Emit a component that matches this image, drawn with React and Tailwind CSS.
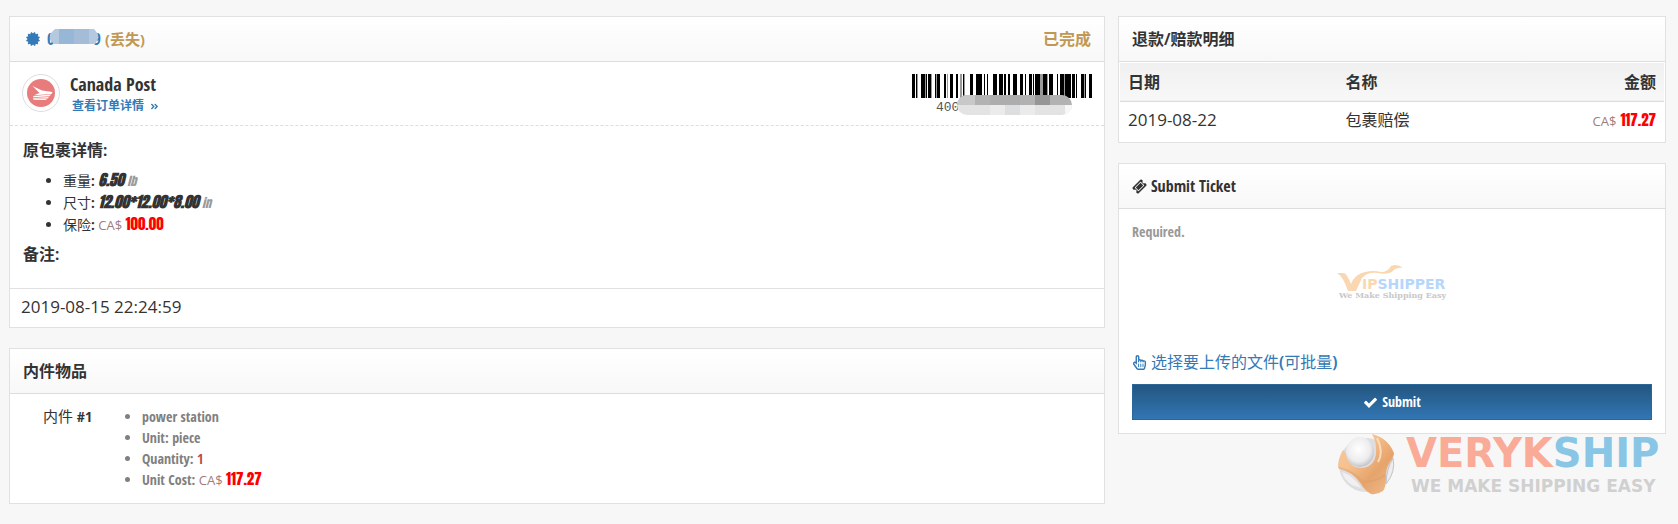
import { FaAngleDoubleRight, FaRegHandPointer } from "react-icons/fa";

const BARS = [
  [0, 3], [4, 1], [9, 4], [14, 1], [16, 3], [23, 1], [25, 3], [32, 2], [38, 3], [44, 2],
  [51, 1], [58, 3], [64, 6], [72, 1], [75, 1], [81, 4], [87, 4], [92, 2], [96, 2],
  [101, 4], [108, 3], [113, 1], [117, 3], [121, 1], [123, 5], [131, 4], [137, 4], [145, 1],
  [148, 4], [153, 6], [160, 3], [164, 1], [169, 3], [173, 1], [177, 3],
];
const GRAY_BARS = [[5, 1], [13, 2], [19, 1], [24, 1], [35, 1], [48, 2], [52, 1], [128, 3], [135, 1], [152, 1], [172, 2]];

const ITEMS = [
  { name: "power station", unit: "piece", quantity: 1, cost: "117.27" },
];

const REFUNDS = [
  { date: "2019-08-22", name: "包裹赔偿", amount: "117.27" },
];

export default function App() {
  return (
    <div className="min-h-screen bg-[#f7f7f7] pt-4 pl-[9px] pr-3 text-[#333] font-['Open_Sans_Condensed','Noto_Sans_CJK_SC',sans-serif]">
      <div className="grid grid-cols-[2fr_1fr] gap-[13px] items-start">
        <main className="flex flex-col gap-5 min-w-0">
          <PackageCard />
          <ItemsCard />
        </main>
        <aside className="flex flex-col min-w-0">
          <RefundCard />
          <TicketCard />
          <VerykLogo />
        </aside>
      </div>
    </div>
  );
}

function Card({ children, className = "" }) {
  return <section className={`bg-white border border-[#e1e1e1] ${className}`}>{children}</section>;
}

function CardHeader({ children }) {
  return (
    <header className="h-[45px] px-[13px] flex items-center border-b border-[#ddd] bg-linear-to-b from-white to-[#f8f8f8] font-bold text-base">
      {children}
    </header>
  );
}

function Money({ value }) {
  return (
    <>
      <span className="font-['Open_Sans',sans-serif] text-[13px] leading-none font-medium text-[#a07c7c]">CA$</span>{" "}
      <span className="font-['Anton',sans-serif] font-normal text-[15px] leading-none text-[#f00]">{value}</span>
    </>
  );
}

/* Package */
function PackageCard() {
  return (
    <Card>
      <CardHeader>
        <div className="flex-1 flex items-center gap-1 pl-0.5">
          <a href="#package" className="flex items-center gap-1.5 text-[#337ab7]">
            <CertificateIcon />
            <span className="relative flex w-[54px] justify-between">
              <span>0</span><span>9</span>
              <IdMask />
            </span>
          </a>
          <span className="text-[#c09853] text-[15px]">(丢失)</span>
        </div>
        <span className="text-[#c09853]">已完成</span>
      </CardHeader>

      <div className="flex items-start h-16 p-3 border-b border-dashed border-[#ddd]">
        <CanadaPostLogo />
        <div className="pl-2.5">
          <h2 className="font-bold text-lg leading-5">Canada Post</h2>
          <a href="#order" className="flex items-center gap-1.5 pl-0.5 text-xs leading-6 font-bold text-[#337ab7]">
            查看订单详情 <FaAngleDoubleRight size={9} />
          </a>
        </div>
        <Barcode />
      </div>

      <div className="px-[13px] pt-3 pb-[22px]">
        <h3 className="font-bold text-base leading-6">原包裹详情:</h3>
        <ul className="list-disc pl-10 mt-2 text-sm leading-[22px]">
          <li className="h-[22px]">重量<b>:</b> <Measure value="6.50" unit="lb" /></li>
          <li className="h-[22px]">尺寸<b>:</b> <Measure value="12.00*12.00*8.00" unit="in" /></li>
          <li className="h-[22px]">保险<b>:</b> <Money value="100.00" /></li>
        </ul>
        <h3 className="font-bold text-base leading-6 mt-1.5">备注:</h3>
      </div>

      <div className="h-[39px] px-[11px] border-t border-[#e1e1e1] text-[17px] leading-9 font-['Open_Sans',sans-serif]">
        2019-08-15 22:24:59
      </div>
    </Card>
  );
}

function Measure({ value, unit }) {
  return (
    <span className="font-['Anton',sans-serif] italic leading-none">
      <span className="text-[15px] leading-none font-bold">{value}</span>{" "}
      <span className="text-xs leading-none text-[#999]">{unit}</span>
    </span>
  );
}

/* Items */
function ItemsCard() {
  return (
    <Card>
      <CardHeader>内件物品</CardHeader>
      {ITEMS.map((item, i) => (
        <div key={item.name} className="flex pl-[33px] pt-3 pb-[13px] leading-[21px]">
          <div className="w-[99px] text-[15px] leading-[21px]">内件 <b>#{i + 1}</b></div>
          <ul className="list-disc text-sm leading-[21px] font-bold text-[#808080]">
            <li className="h-[21px]">{item.name}</li>
            <li className="h-[21px]">Unit: {item.unit}</li>
            <li className="h-[21px]">Quantity: <span className="text-[#b94a48]">{item.quantity}</span></li>
            <li className="h-[21px]">Unit Cost: <Money value={item.cost} /></li>
          </ul>
        </div>
      ))}
    </Card>
  );
}

/* Refunds */
function RefundCard() {
  return (
    <Card className="mb-5">
      <CardHeader>退款/赔款明细</CardHeader>
      <div className="p-px pb-1">
        <table className="w-full table-fixed text-base">
          <thead>
            <tr className="h-[38px] border-b border-[#ddd] bg-linear-to-b from-[#f0f0f0] to-[#f8f8f8]">
              <th className="w-2/5 px-2 text-left">日期</th>
              <th className="w-2/5 px-2 text-left">名称</th>
              <th className="px-2 text-right">金额</th>
            </tr>
          </thead>
          <tbody>
            {REFUNDS.map((r) => (
              <tr key={r.date} className="h-[37px]">
                <td className="px-2 text-[17px] font-['Open_Sans',sans-serif]">{r.date}</td>
                <td className="px-2">{r.name}</td>
                <td className="px-2 text-right"><Money value={r.amount} /></td>
              </tr>
            ))}
          </tbody>
        </table>
      </div>
    </Card>
  );
}

/* Ticket form */
function TicketCard() {
  return (
    <Card>
      <CardHeader>
        <h2 className="flex items-center gap-1">
          <TicketIcon /> Submit Ticket
        </h2>
      </CardHeader>
      <form className="flex flex-col p-[13px]" onSubmit={(e) => e.preventDefault()}>
        <div className="relative">
          <textarea
            aria-label="Submit Ticket"
            placeholder="Required."
            className="block w-full h-[120px] resize-none text-sm font-bold placeholder:text-[#999] outline-none"
          />
          <VipShipperLogo />
        </div>
        <button type="button" className="flex items-center gap-1 mt-2 mb-2.5 h-6 text-base leading-6 text-[#337ab7]">
          <FaRegHandPointer size={15} />
          <span>选择要上传的文件<b>(</b>可批量<b>)</b></span>
        </button>
        <button type="submit" className="flex items-center justify-center gap-1 h-9 border border-[#2b669a] bg-linear-to-b from-[#235680] to-[#3276b4] text-sm font-bold text-white">
          <CheckIcon /> Submit
        </button>
      </form>
    </Card>
  );
}

/* Icons */
function CertificateIcon() {
  return (
    <svg width="16" height="16" viewBox="0 0 1792 1792" fill="currentColor">
      <path d="M1504 896l138 135q30 28 20 70-12 41-52 51l-188 48 53 186q12 41-19 70-29 31-70 19l-186-53-48 188q-10 40-51 52-12 2-19 2-31 0-51-22l-135-138-135 138q-28 30-70 20-41-11-51-52l-48-188-186 53q-41 12-70-19-31-29-19-70l53-186-188-48q-40-10-52-51-10-42 20-70l138-135-138-135q-30-28-20-70 12-41 52-51l188-48-53-186q-12-41 19-70 29-31 70-19l186 53 48-188q10-41 51-51 41-12 70 19l135 139 135-139q29-30 70-19 41 10 51 51l48 188 186-53q41-12 70 19 31 29 19 70l-53 186 188 48q40 10 52 51 10 42-20 70z" />
    </svg>
  );
}

function TicketIcon() {
  return (
    <svg width="15" height="15" viewBox="0 0 1792 1792" fill="currentColor">
      <path d="M1024 452l316 316-572 572-316-316zm-211 979l618-618q19-19 19-45t-19-45l-362-362q-18-18-45-18t-45 18l-618 618q-19 19-19 45t19 45l362 362q18 18 45 18t45-18zm889-637l-907 908q-37 37-90.5 37t-90.5-37l-126-126q56-56 56-136t-56-136-136-56-136 56l-125-126q-37-37-37-90.5t37-90.5l907-906q37-37 90.5-37t90.5 37l125 125q-56 56-56 136t56 136 136 56 136-56l126 125q37 37 37 90.5t-37 90.5z" />
    </svg>
  );
}

function CheckIcon() {
  return (
    <svg width="15" height="15" viewBox="0 0 1792 1792" fill="currentColor">
      <path d="M1671 566q0 40-28 68l-724 724-136 136q-28 28-68 28t-68-28l-136-136-362-362q-28-28-28-68t28-68l136-136q28-28 68-28t68 28l294 295 656-657q28-28 68-28t68 28l136 136q28 28 28 68z" />
    </svg>
  );
}

function IdMask() {
  return (
    <svg width="49" height="15" viewBox="0 0 49 15" className="absolute left-[3px] top-0.5">
      <defs>
        <clipPath id="id-mask"><path d="M5 0H44L48 5V10L45 15H4L0 11V5z" /></clipPath>
      </defs>
      <g clipPath="url(#id-mask)">
        <rect width="49" height="15" fill="#b4c9e0" />
        <rect x="9" width="15" height="15" fill="#98b6d6" />
        <rect x="24" width="15" height="15" fill="#a5bcd9" />
      </g>
    </svg>
  );
}

function CanadaPostLogo() {
  return (
    <svg width="38" height="38" viewBox="0 0 38 38" className="shrink-0">
      <circle cx="19" cy="19" r="18.5" fill="#fff" stroke="#ddd" />
      <circle cx="19" cy="19" r="14" fill="#e87c7c" />
      <g fill="#fff">
        <path d="M10.500 12L20 16.500L30.500 18L29.500 20L12 21.300L17.500 19z" />
        <path d="M11.500 22L29 20.600L27.500 22.200L11 23.200z" />
        <path d="M11 23.900L27 22.900L25.500 24.500L11 24.800z" />
        <path d="M11 25.300L25 25L23.500 26H12z" />
      </g>
    </svg>
  );
}

function Barcode() {
  return (
    <div className="relative w-[180px] ml-auto">
      <svg width="180" height="24" viewBox="0 0 180 24" shapeRendering="crispEdges">
        {GRAY_BARS.map(([x, w]) => <rect key={x} x={x} width={w} height="24" fill="#999" />)}
        {BARS.map(([x, w]) => <rect key={x} x={x} width={w} height="24" fill="#000" />)}
      </svg>
      <div className="pl-6 text-[13px] leading-5 text-[#555] font-['Liberation_Mono',monospace]">400</div>
      <svg width="115" height="20" viewBox="0 0 115 20" className="absolute left-[45px] top-[21px]">
        <defs>
          <clipPath id="code-mask"><rect width="115" height="20" rx="10" /></clipPath>
        </defs>
        <g clipPath="url(#code-mask)">
          <rect width="115" height="10" fill="#b2b2b2" />
          <rect width="18" height="10" fill="#c8c8c8" />
          <rect x="33" width="30" height="10" fill="#adadad" />
          <rect x="78" width="15" height="10" fill="#969696" />
          <rect y="10" width="115" height="10" fill="#e3e3e3" />
          <rect x="33" y="10" width="15" height="10" fill="#ebebeb" />
          <rect x="48" y="10" width="15" height="10" fill="#dcdee0" />
          <rect x="63" y="10" width="15" height="10" fill="#ebebeb" />
          <rect x="108" y="10" width="7" height="10" fill="#f7f7f7" />
        </g>
      </svg>
    </div>
  );
}

function VipShipperLogo() {
  return (
    <svg width="114" height="36" viewBox="0 0 114 36" className="absolute inset-0 m-auto pointer-events-none">
      <path d="M2 9H9Q12 10 16 20Q20 10 30 8Q38 6 46 8Q53 8 56 2Q62 -1 68 4Q61 3 57 8Q51 11 43 9Q32 8 27 14L21 27H13Q8 12 2 9z" fill="#fad7b0" />
      <text x="27" y="25" fontFamily="DejaVu Sans" fontSize="14" fontWeight="bold">
        <tspan fill="#fad7b0">IP</tspan><tspan fill="#b5d6fd">SHIPPER</tspan>
      </text>
      <text x="4" y="34" fontFamily="DejaVu Serif" fontSize="8" fontWeight="bold" fill="#c8c8c8">We Make Shipping Easy</text>
    </svg>
  );
}

function VerykLogo() {
  return (
    <svg width="326" height="64" viewBox="0 0 326 64" className="self-end mr-0.5 overflow-visible">
      <defs>
        <radialGradient id="ball" cx="0.45" cy="0.4" r="0.6">
          <stop offset="0" stopColor="#fff" /><stop offset="0.7" stopColor="#ececee" /><stop offset="1" stopColor="#c4c4c8" />
        </radialGradient>
        <linearGradient id="shell" x1="0" y1="0" x2="1" y2="1">
          <stop offset="0" stopColor="#f3c9a0" /><stop offset="0.35" stopColor="#f6c190" /><stop offset="0.65" stopColor="#e6a46c" /><stop offset="1" stopColor="#f0bd90" />
        </linearGradient>
      </defs>
      <circle cx="28" cy="31" r="27" fill="#dedee1" />
      <path d="M4 38Q16 42 23 54L14 51Q6 46 4 38z" fill="#f0f0f2" />
      <path d="M55 24Q58 38 48 50Q48 36 55 24z" fill="#ededf0" stroke="#c4c4c8" />
      <path d="M34 0Q50 4 56 19Q56 23 52 28Q47 36 48 44Q48 53 45 57Q39 61 33 60Q27 57 23 50Q14 37 0 34Q0 24 5 16Q8 18 9 24Q13 34 24 34Q36 33 38 20Q39 8 34 0z" fill="url(#shell)" />
      <path d="M1 34Q15 37 25 48Q38 48 47 41" fill="none" stroke="#d99a62" strokeOpacity="0.4" strokeWidth="2" />
      <ellipse cx="22" cy="18" rx="14" ry="15" fill="url(#ball)" />
      <path d="M39 4Q46 18 40 28" fill="none" stroke="#fbdcb9" strokeWidth="2" />
      <g fontFamily="DejaVu Sans" fontWeight="bold">
        <text x="68" y="33" fontSize="40"><tspan fill="#f9ab97">VERYK</tspan><tspan fill="#89c6e6">SHIP</tspan></text>
        <text x="73" y="58" fontSize="17" fill="#d0d0d0">WE MAKE SHIPPING EASY</text>
      </g>
    </svg>
  );
}
